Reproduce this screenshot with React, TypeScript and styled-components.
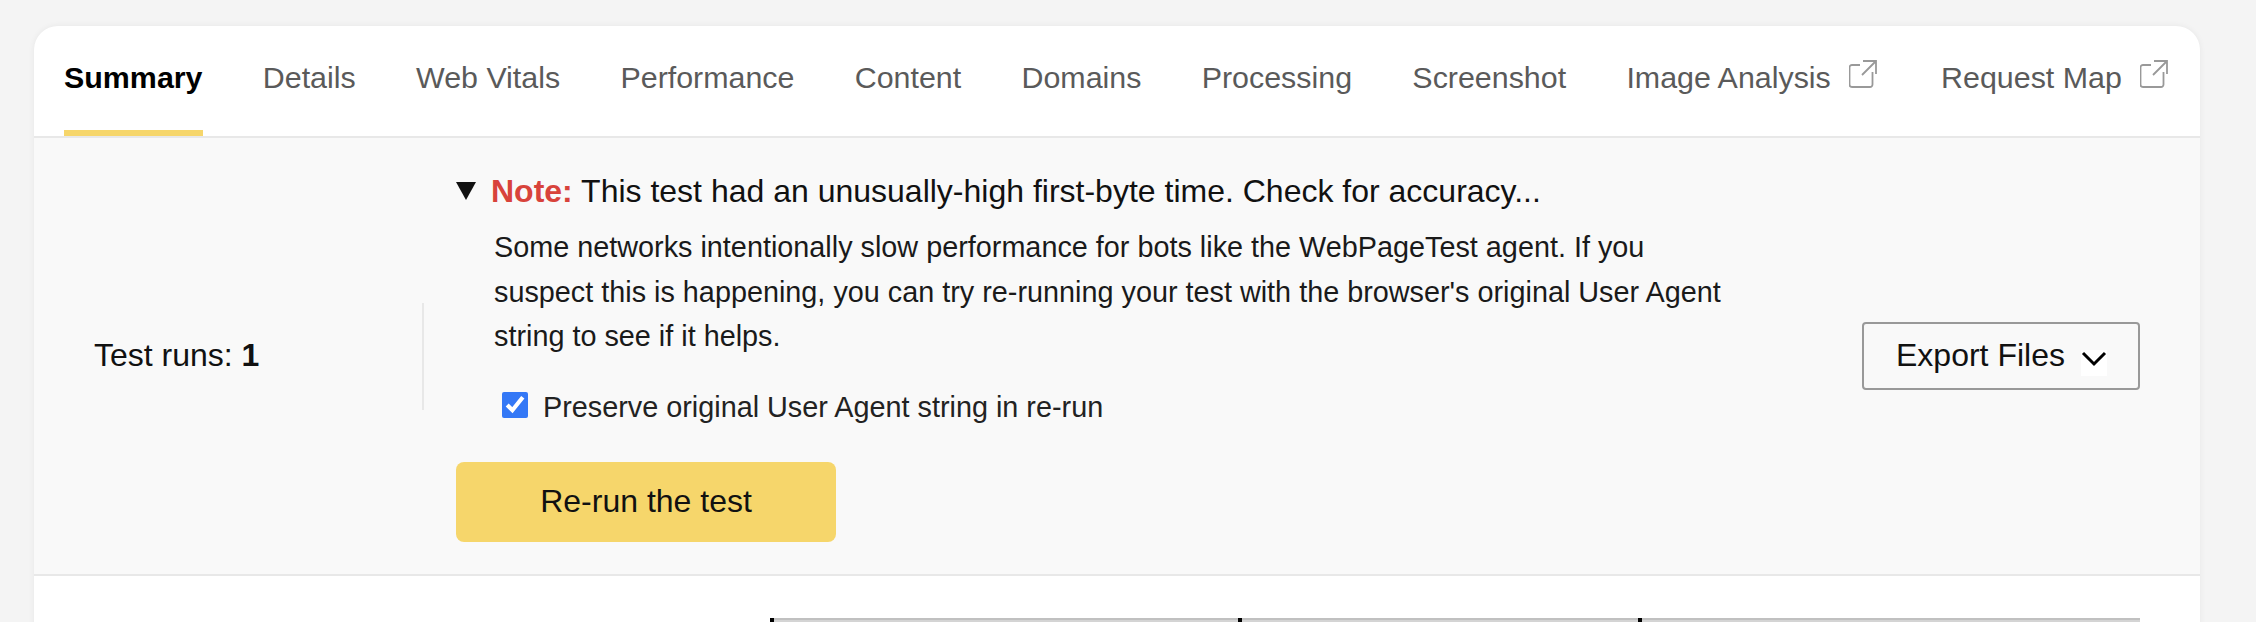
import React from 'react';
import styled, { createGlobalStyle } from 'styled-components';

const GlobalStyle = createGlobalStyle`
  html, body {
    margin: 0;
    height: 622px;
    overflow: hidden;
    background-color: #f4f4f4;
    font-family: 'Liberation Sans', Arial, sans-serif;
    color: #111111;
  }
`;

const Page = styled.div`
  padding: 26px 56px 0 34px;
`;

const Card = styled.div`
  background-color: #ffffff;
  border-radius: 24px 24px 0 0;
  box-shadow: 0 0 6px rgba(0, 0, 0, 0.06);
`;

const Tabs = styled.nav`
  display: flex;
  height: 110px;
  padding-left: 30px;
  gap: 60.3px;
  border-bottom: 2px solid #e8e8e8;
`;

const Tab = styled.a<{ $active?: boolean }>`
  display: flex;
  align-items: center;
  gap: 18px;
  height: 110px;
  box-sizing: border-box;
  padding-bottom: 2px;
  font-size: 30.4px;
  white-space: nowrap;
  font-weight: ${(p) => (p.$active ? 700 : 400)};
  color: ${(p) => (p.$active ? '#000000' : '#5a5a5a')};
  border-bottom: 6px solid ${(p) => (p.$active ? '#f6d66b' : 'transparent')};
`;

const ExternalIcon = styled.svg`
  width: 28px;
  height: 28px;
  margin: -3px 4px 3px 0;
  fill: none;
  stroke: #999999;
  stroke-width: 1.8;
`;

const Panel = styled.section`
  display: flex;
  height: 436px;
  background-color: #f9f9f9;
  border-bottom: 2px solid #e8e8e8;
`;

const RunCount = styled.div`
  align-self: center;
  width: 390px;
  height: 107px;
  box-sizing: border-box;
  padding: 0 0 2px 60px;
  display: flex;
  align-items: center;
  font-size: 32px;
  white-space: pre;
  border-right: 2px solid #e8e8e8;
`;

const Note = styled.div`
  margin-left: 32px;
  padding-top: 31px;
  width: 1240px;
`;

const NoteTitle = styled.div`
  display: flex;
  align-items: center;
  font-size: 32px;
  height: 44px;
  white-space: pre;
`;

const Marker = styled.span`
  width: 0;
  height: 0;
  border-left: 10.5px solid transparent;
  border-right: 10.5px solid transparent;
  border-top: 18px solid #111111;
  margin-right: 15px;
`;

const NoteLabel = styled.b`
  color: #d8433b;
`;

const NoteBody = styled.p`
  margin: 12px 0 0 38px;
  width: 1240px;
  font-size: 28.8px;
  line-height: 44.5px;
  color: #1a1a1a;
`;

const OptionRow = styled.label`
  display: flex;
  align-items: center;
  gap: 15px;
  margin: 32px 0 0 46px;
  font-size: 28.8px;
  color: #222222;
`;

const OptionBox = styled.input`
  width: 26px;
  height: 26px;
  margin: -5px 0 0 0;
  accent-color: #3478f6;
`;

const RerunButton = styled.button`
  display: block;
  width: 380px;
  height: 80px;
  margin-top: 38px;
  border: none;
  border-radius: 8px;
  background-color: #f6d66b;
  font-family: inherit;
  font-size: 32px;
  color: #111111;
`;

const ExportButton = styled.button`
  align-self: center;
  display: flex;
  align-items: center;
  gap: 16px;
  width: 278px;
  height: 68px;
  padding: 0 0 2px 32px;
  margin-left: auto;
  margin-right: 60px;
  background: transparent;
  border: 2px solid #999999;
  border-radius: 4px;
  font-family: inherit;
  font-size: 32px;
  color: #111111;
`;

const Chevron = styled.svg`
  width: 26px;
  height: 26px;
  background-color: #ffffff;
  margin-top: 16px;
  fill: none;
  stroke: #000000;
  stroke-width: 3;
`;

const ResultsTable = styled.div`
  display: grid;
  grid-template-columns: 468px 400px 502px;
  margin: 42px 0 0 736px;
`;

const TableHead = styled.div`
  display: flex;
  height: 20px;
`;

const HeadTick = styled.span`
  width: 4px;
  background-color: #000000;
`;

const HeadRule = styled.span`
  flex: 1;
  background-color: #d4d4d4;
  border-top: 2px solid #c0c0c0;
`;

const tabs = ['Details', 'Web Vitals', 'Performance', 'Content', 'Domains', 'Processing', 'Screenshot'];

const External: React.FC = () => (
  <ExternalIcon viewBox="0 0 28 28">
    <path d="M11 5H3a2.5 2.5 0 0 0-2.5 2.5v17A2.5 2.5 0 0 0 3 27h18a2.5 2.5 0 0 0 2.5-2.5V12" />
    <path d="M13 15L27 1M14 1h13v13" />
  </ExternalIcon>
);

const App: React.FC = () => {
  return (
    <Page>
      <GlobalStyle />
      <Card>
        <Tabs>
          <Tab $active>Summary</Tab>
          {tabs.map((t) => (
            <Tab key={t}>{t}</Tab>
          ))}
          <Tab>
            Image Analysis
            <External />
          </Tab>
          <Tab>
            Request Map
            <External />
          </Tab>
        </Tabs>
        <Panel>
          <RunCount>
            Test runs: <b>1</b>
          </RunCount>
          <Note>
            <NoteTitle>
              <Marker />
              <NoteLabel>Note:</NoteLabel> This test had an unusually-high first-byte time. Check for accuracy...
            </NoteTitle>
            <NoteBody>
              Some networks intentionally slow performance for bots like the WebPageTest agent. If you suspect this is
              happening, you can try re-running your test with the browser's original User Agent string to see if it
              helps.
            </NoteBody>
            <OptionRow>
              <OptionBox type="checkbox" defaultChecked />
              Preserve original User Agent string in re-run
            </OptionRow>
            <RerunButton>Re-run the test</RerunButton>
          </Note>
          <ExportButton>
            Export Files
            <Chevron viewBox="0 0 26 26">
              <path d="M2 3l11 11L24 3" />
            </Chevron>
          </ExportButton>
        </Panel>
        <ResultsTable>
          {[0, 1, 2].map((i) => (
            <TableHead key={i}>
              <HeadTick />
              <HeadRule />
            </TableHead>
          ))}
        </ResultsTable>
      </Card>
    </Page>
  );
};

export default App;
